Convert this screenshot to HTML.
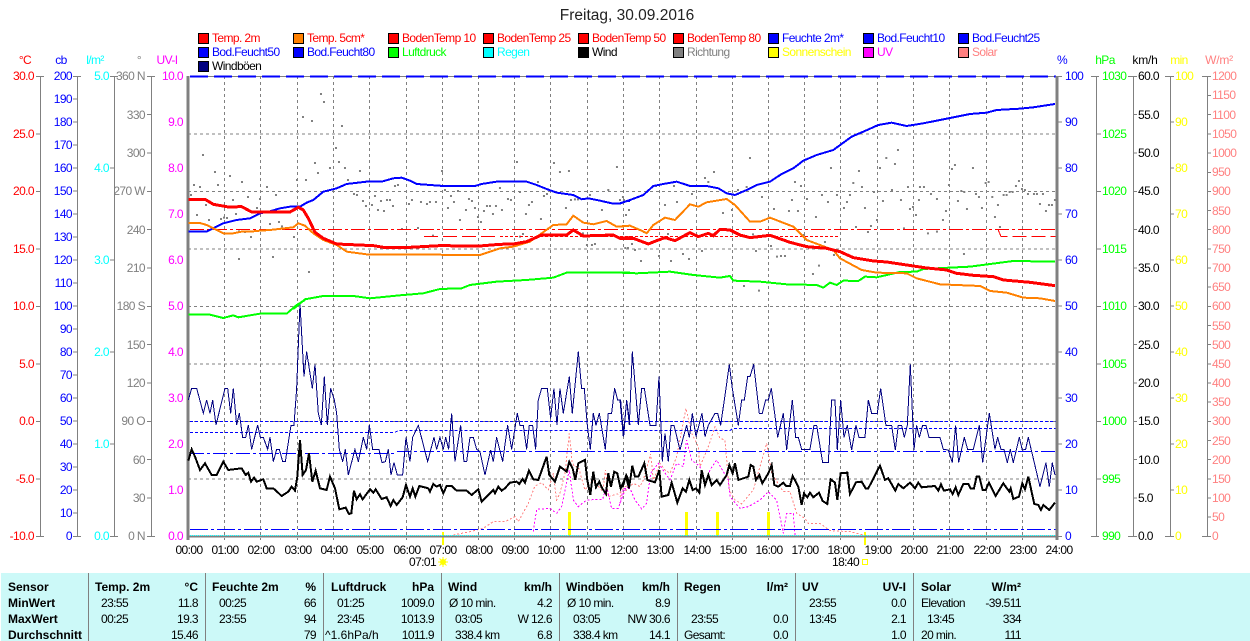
<!DOCTYPE html>
<html><head><meta charset="utf-8"><title>Freitag, 30.09.2016</title>
<style>
html,body{margin:0;padding:0;background:#fff;width:1250px;height:641px;overflow:hidden}
svg{display:block;font-family:"Liberation Sans",sans-serif;font-size:12px;letter-spacing:-.6px}
.e{text-anchor:end}.m{text-anchor:middle}
.b{font-weight:bold;letter-spacing:0}
polyline,.c{fill:none;shape-rendering:crispEdges}
</style></head><body>
<svg width="1250" height="641" viewBox="0 0 1250 641">
<text x="627" y="20" class="m" font-size="15.5" fill="#222" style="letter-spacing:0">Freitag, 30.09.2016</text>
<!-- legend -->
<g stroke="#000" shape-rendering="crispEdges">
<rect x="198.500" y="33.500" width="10" height="10" fill="#f00"/><rect x="293.500" y="33.500" width="10" height="10" fill="#ff8000"/><rect x="388.500" y="33.500" width="10" height="10" fill="#f00"/><rect x="483.500" y="33.500" width="10" height="10" fill="#f00"/><rect x="578.500" y="33.500" width="10" height="10" fill="#f00"/><rect x="673.500" y="33.500" width="10" height="10" fill="#f00"/><rect x="768.500" y="33.500" width="10" height="10" fill="#00f"/><rect x="863.500" y="33.500" width="10" height="10" fill="#00f"/><rect x="958.500" y="33.500" width="10" height="10" fill="#00f"/>
<rect x="198.500" y="47.500" width="10" height="10" fill="#00f"/><rect x="293.500" y="47.500" width="10" height="10" fill="#00f"/><rect x="388.500" y="47.500" width="10" height="10" fill="#0f0"/><rect x="483.500" y="47.500" width="10" height="10" fill="#0ff"/><rect x="578.500" y="47.500" width="10" height="10" fill="#000"/><rect x="673.500" y="47.500" width="10" height="10" fill="#808080"/><rect x="768.500" y="47.500" width="10" height="10" fill="#ff0"/><rect x="863.500" y="47.500" width="10" height="10" fill="#f0f"/><rect x="958.500" y="47.500" width="10" height="10" fill="#ff8080"/>
<rect x="198.500" y="61.500" width="10" height="10" fill="#000080"/>
</g>
<g>
<text x="212" y="42" fill="#f00">Temp. 2m</text><text x="307" y="42" fill="#f00">Temp. 5cm*</text><text x="402" y="42" fill="#f00">BodenTemp 10</text><text x="497" y="42" fill="#f00">BodenTemp 25</text><text x="592" y="42" fill="#f00">BodenTemp 50</text><text x="687" y="42" fill="#f00">BodenTemp 80</text><text x="782" y="42" fill="#00f">Feuchte 2m*</text><text x="877" y="42" fill="#00f">Bod.Feucht10</text><text x="972" y="42" fill="#00f">Bod.Feucht25</text>
<text x="212" y="56" fill="#00f">Bod.Feucht50</text><text x="307" y="56" fill="#00f">Bod.Feucht80</text><text x="402" y="56" fill="#0f0">Luftdruck</text><text x="497" y="56" fill="#0ff">Regen</text><text x="592" y="56" fill="#000">Wind</text><text x="687" y="56" fill="#808080">Richtung</text><text x="782" y="56" fill="#ff0">Sonnenschein</text><text x="877" y="56" fill="#f0f">UV</text><text x="972" y="56" fill="#ff8080">Solar</text>
<text x="212" y="70" fill="#000">Windböen</text>
</g>
<!-- axis units -->
<g class="m">
<text x="25" y="64" fill="#f00">°C</text><text x="61" y="64" fill="#00f">cb</text><text x="95" y="64" fill="#0ff">l/m²</text><text x="139" y="64" fill="#808080">°</text><text x="167" y="64" fill="#f0f">UV-I</text>
<text x="1062" y="64" fill="#00f">%</text><text x="1105" y="64" fill="#0f0">hPa</text><text x="1145" y="64" fill="#000" style="letter-spacing:-.2px">km/h</text><text x="1179" y="64" fill="#ff0">min</text><text x="1219" y="64" fill="#ff8080" style="letter-spacing:-.2px">W/m²</text>
</g>
<!-- axis lines -->
<g stroke="#808080" class="c">
<path d="M40.500 76V536M36 76.500h8M36 536.500h8M36 134h4M36 191.500h4M36 249h4M36 306.500h4M36 364h4M36 421.500h4M36 479h4"/>
<path d="M77.500 76V536M73 76.500h8M73 536.500h8M73 99h4M73 122h4M73 145h4M73 168h4M73 191h4M73 214h4M73 237h4M73 260h4M73 283h4M73 306h4M73 329h4M73 352h4M73 375h4M73 398h4M73 421h4M73 444h4M73 467h4M73 490h4M73 513h4"/>
<path d="M114.500 76V536M110 76.500h8M110 536.500h8M110 168h4M110 260h4M110 352h4M110 444h4"/>
<path d="M151.500 76V536M147 76.500h8M147 536.500h8M147 114.500h4M147 153h4M147 191.500h4M147 229.500h4M147 268h4M147 306.500h4M147 344.500h4M147 383h4M147 421.500h4M147 459.500h4M147 498h4"/>
<path d="M1096.500 76V536M1091 76.500h8M1091 536.500h8M1096 134h5M1096 191.500h5M1096 249h5M1096 306.500h5M1096 364h5M1096 421.500h5M1096 479h5"/>
<path d="M1133.500 76V536M1128 76.500h9M1128 536.500h9M1133 114.500h4M1133 153h4M1133 191.500h4M1133 229.500h4M1133 268h4M1133 306.500h4M1133 344.500h4M1133 383h4M1133 421.500h4M1133 459.500h4M1133 498h4"/>
<path d="M1170.500 76V536M1165 76.500h9M1165 536.500h9M1170 122h4M1170 168h4M1170 214h4M1170 260h4M1170 306h4M1170 352h4M1170 398h4M1170 444h4M1170 490h4"/>
<path d="M1207.500 76V536M1202 76.500h9M1202 536.500h9M1207 95.500h4M1207 114.500h4M1207 134h4M1207 153h4M1207 172.500h4M1207 191.500h4M1207 210.500h4M1207 229.500h4M1207 249h4M1207 268h4M1207 287h4M1207 306.500h4M1207 325.500h4M1207 344.500h4M1207 364h4M1207 383h4M1207 402h4M1207 421.500h4M1207 440.500h4M1207 459.500h4M1207 479h4M1207 498h4M1207 517h4"/>
<path d="M1056 76.500h6M1056 122h6M1056 168h6M1056 214h6M1056 260h6M1056 306h6M1056 352h6M1056 398h6M1056 444h6M1056 490h6M1056 536.500h6"/>
</g>
<!-- left labels -->
<g class="e" fill="#f00"><text x="34" y="80">30.0</text><text x="34" y="138">25.0</text><text x="34" y="195">20.0</text><text x="34" y="253">15.0</text><text x="34" y="310">10.0</text><text x="34" y="368">5.0</text><text x="34" y="425">0.0</text><text x="34" y="483">-5.0</text><text x="34" y="540">-10.0</text></g>
<g class="e" fill="#00f"><text x="72" y="80">200</text><text x="72" y="103">190</text><text x="72" y="126">180</text><text x="72" y="149">170</text><text x="72" y="172">160</text><text x="72" y="195">150</text><text x="72" y="218">140</text><text x="72" y="241">130</text><text x="72" y="264">120</text><text x="72" y="287">110</text><text x="72" y="310">100</text><text x="72" y="333">90</text><text x="72" y="356">80</text><text x="72" y="379">70</text><text x="72" y="402">60</text><text x="72" y="425">50</text><text x="72" y="448">40</text><text x="72" y="471">30</text><text x="72" y="494">20</text><text x="72" y="517">10</text><text x="72" y="540">0</text></g>
<g class="e" fill="#0ff"><text x="109" y="80">5.0</text><text x="109" y="172">4.0</text><text x="109" y="264">3.0</text><text x="109" y="356">2.0</text><text x="109" y="448">1.0</text><text x="109" y="540">0.0</text></g>
<g class="e" fill="#808080"><text x="145" y="80">360 N</text><text x="145" y="119">330</text><text x="145" y="157">300</text><text x="145" y="195">270 W</text><text x="145" y="234">240</text><text x="145" y="272">210</text><text x="145" y="310">180 S</text><text x="145" y="349">150</text><text x="145" y="387">120</text><text x="145" y="425">90 O</text><text x="145" y="464">60</text><text x="145" y="502">30</text><text x="145" y="540">0 N</text></g>
<g class="e" fill="#f0f"><text x="183" y="80">10.0</text><text x="183" y="126">9.0</text><text x="183" y="172">8.0</text><text x="183" y="218">7.0</text><text x="183" y="264">6.0</text><text x="183" y="310">5.0</text><text x="183" y="356">4.0</text><text x="183" y="402">3.0</text><text x="183" y="448">2.0</text><text x="183" y="494">1.0</text><text x="183" y="540">0.0</text></g>
<!-- right labels -->
<g fill="#00f"><text x="1065" y="80">100</text><text x="1065" y="126">90</text><text x="1065" y="172">80</text><text x="1065" y="218">70</text><text x="1065" y="264">60</text><text x="1065" y="310">50</text><text x="1065" y="356">40</text><text x="1065" y="402">30</text><text x="1065" y="448">20</text><text x="1065" y="494">10</text><text x="1065" y="540">0</text></g>
<g fill="#0f0"><text x="1102" y="80">1030</text><text x="1102" y="138">1025</text><text x="1102" y="195">1020</text><text x="1102" y="253">1015</text><text x="1102" y="310">1010</text><text x="1102" y="368">1005</text><text x="1102" y="425">1000</text><text x="1102" y="483">995</text><text x="1102" y="540">990</text></g>
<g fill="#000"><text x="1138" y="80">60.0</text><text x="1138" y="119">55.0</text><text x="1138" y="157">50.0</text><text x="1138" y="195">45.0</text><text x="1138" y="234">40.0</text><text x="1138" y="272">35.0</text><text x="1138" y="310">30.0</text><text x="1138" y="349">25.0</text><text x="1138" y="387">20.0</text><text x="1138" y="425">15.0</text><text x="1138" y="464">10.0</text><text x="1138" y="502">5.0</text><text x="1138" y="540">0.0</text></g>
<g fill="#ff0"><text x="1175" y="80">100</text><text x="1175" y="126">90</text><text x="1175" y="172">80</text><text x="1175" y="218">70</text><text x="1175" y="264">60</text><text x="1175" y="310">50</text><text x="1175" y="356">40</text><text x="1175" y="402">30</text><text x="1175" y="448">20</text><text x="1175" y="494">10</text><text x="1175" y="540">0</text></g>
<g fill="#ff8080"><text x="1212" y="80">1200</text><text x="1212" y="99">1150</text><text x="1212" y="119">1100</text><text x="1212" y="138">1050</text><text x="1212" y="157">1000</text><text x="1212" y="176">950</text><text x="1212" y="195">900</text><text x="1212" y="215">850</text><text x="1212" y="234">800</text><text x="1212" y="253">750</text><text x="1212" y="272">700</text><text x="1212" y="291">650</text><text x="1212" y="310">600</text><text x="1212" y="330">550</text><text x="1212" y="349">500</text><text x="1212" y="368">450</text><text x="1212" y="387">400</text><text x="1212" y="406">350</text><text x="1212" y="425">300</text><text x="1212" y="445">250</text><text x="1212" y="464">200</text><text x="1212" y="483">150</text><text x="1212" y="502">100</text><text x="1212" y="521">50</text><text x="1212" y="540">0</text></g>
<!-- grid -->
<g stroke="#808080" stroke-dasharray="3 3" class="c">
<path d="M188 134H1056M188 191.500H1056M188 249H1056M188 306.500H1056M188 364H1056M188 421.500H1056M188 479H1056"/>
<path d="M224.500 76V540M260.500 76V540M297.500 76V540M333.500 76V540M369.500 76V540M406.500 76V540M442.500 76V540M478.500 76V540M514.500 76V540M550.500 76V540M587.500 76V540M623.500 76V540M659.500 76V540M696.500 76V540M732.500 76V540M768.500 76V540M804.500 76V540M840.500 76V540M877.500 76V540M913.500 76V540M949.500 76V540M986.500 76V540M1022.500 76V540"/>
</g>
<!-- direction dots -->
<path transform="translate(180 70) scale(.3333)" fill="none" stroke="#808080" stroke-width="6" stroke-linecap="square" d="M423 72h0M432 96h0M369 141h0M396 153h0M486 168h0M468 234h0M69 255h0M477 276h0M405 279h0M1011 276h0M1122 279h0M450 294h0M495 294h0M105 306h0M414 309h0M540 303h0M786 303h0M1140 306h0M1167 303h0M1311 291h0M150 318h0M351 330h0M378 330h0M504 330h0M186 336h0M114 345h0M42 345h0M60 351h0M261 351h0M1074 336h0M654 345h0M645 348h0M960 354h0M1020 366h0M1285 360h0M795 360h0M33 375h0M204 381h0M288 375h0M240 387h0M159 390h0M78 405h0M522 372h0M531 375h0M813 378h0M1092 378h0M834 363h0M1101 372h0M585 378h0M549 393h0M558 408h0M576 405h0M621 390h0M630 390h0M603 393h0M984 387h0M993 390h0M1056 396h0M1047 405h0M696 390h0M723 396h0M741 402h0M750 396h0M768 396h0M867 387h0M876 393h0M822 396h0M687 402h0M921 408h0M930 408h0M948 408h0M1173 390h0M1230 375h0M1185 388h0M1194 388h0M1329 381h0M1332 390h0M231 414h0M594 420h0M612 423h0M639 408h0M804 414h0M858 420h0M885 414h0M1158 414h0M1266 420h0M912 423h0M939 432h0M966 420h0M1038 432h0M51 435h0M132 443h0M123 447h0M141 444h0M168 432h0M87 450h0M840 450h0M1083 447h0M894 441h0M903 456h0M297 456h0M306 469h0M270 462h0M666 477h0M714 474h0M759 497h0M1209 490h0M1245 522h0M1236 525h0M1221 525h0M1029 492h0M1020 500h0M177 484h0M195 486h0M213 501h0M342 501h0M1336 534h0M1344 534h0M279 561h0M177 567h0M387 606h0"/>
<path transform="translate(620 70) scale(.3333)" fill="none" stroke="#808080" stroke-width="6" stroke-linecap="square" d="M390 264h0M834 240h0M799 264h0M825 282h0M633 294h0M282 306h0M717 303h0M780 294h0M996 297h0M1005 285h0M1059 294h0M255 324h0M265 336h0M525 336h0M543 348h0M987 345h0M1097 339h0M1106 336h0M1197 333h0M1188 348h0M900 351h0M864 351h0M912 351h0M700 339h0M726 351h0M162 348h0M108 348h0M816 360h0M354 360h0M380 351h0M354 372h0M426 381h0M516 390h0M561 387h0M606 375h0M651 375h0M690 375h0M762 366h0M933 372h0M951 387h0M1024 363h0M1033 366h0M1068 372h0M1077 381h0M1117 381h0M1151 375h0M1160 375h0M1169 366h0M1178 366h0M1206 357h0M1215 360h0M1224 372h0M1242 372h0M1251 372h0M1269 372h0M1260 402h0M1287 405h0M1296 405h0M1278 423h0M1305 390h0M135 405h0M171 396h0M216 372h0M27 420h0M0 390h0M624 396h0M681 396h0M789 393h0M843 390h0M897 390h0M1014 393h0M1134 405h0M1086 414h0M735 414h0M1041 417h0M1125 441h0M969 450h0M978 423h0M672 414h0M588 441h0M888 435h0M870 417h0M879 411h0M462 417h0M507 423h0M534 423h0M309 429h0M336 420h0M18 435h0M36 522h0M45 540h0M72 486h0M144 492h0M399 493h0M453 528h0M246 543h0M408 543h0M189 552h0M207 567h0M117 558h0M153 573h0M63 573h0M471 560h0M483 558h0M495 558h0M615 516h0M552 495h0M708 471h0M744 486h0M753 468h0M771 450h0M852 475h0M924 490h0M951 485h0M1032 552h0M1140 471h0M642 555h0M597 587h0M579 612h0M372 648h0M417 662h0M336 480h0M318 477h0"/>
<!-- sun bars -->
<g fill="#ff0" shape-rendering="crispEdges"><rect x="442" y="532" width="2" height="13"/><rect x="568" y="512" width="3" height="24"/><rect x="685" y="512" width="3" height="24"/><rect x="716" y="512" width="3" height="24"/><rect x="767" y="512" width="3" height="24"/><rect x="864" y="532" width="2" height="13"/></g>
<!-- solar + UV -->
<g stroke-dasharray="6 6" class="c">
<polyline transform="translate(180 300) scale(.3333)" stroke="#ff8080" stroke-width="3" points="820,705 870,695 910,685 940,665 975,665 1005,650 1015,665 1045,610 1065,558 1085,548 1105,570 1120,520 1130,600 1140,580 1155,520 1168,400 1177,490 1185,500 1195,500 1215,570 1240,540 1268,575 1277,510 1285,590 1320,580 1335,560 1350,555"/>
<polyline transform="translate(620 300) scale(.3333)" stroke="#ff8080" stroke-width="3" points="0,590 40,550 60,560 70,540 92,462 100,540 120,490 135,510 150,520 170,470 198,325 215,400 235,440 240,500 265,440 285,380 300,415 315,420 328,570 345,600 365,612 400,570 440,430 455,520 490,575 510,575 530,640 555,655 565,670 600,670 630,692 690,695 730,705"/>
<polyline transform="translate(180 300) scale(.3333)" stroke="#f0f" stroke-width="3" points="1060,695 1070,628 1110,625 1130,640 1145,620 1168,510 1180,600 1195,620 1220,600 1268,598 1280,560 1295,625 1315,625 1335,570 1350,555"/>
<polyline transform="translate(620 300) scale(.3333)" stroke="#f0f" stroke-width="3" points="0,610 10,565 30,565 45,600 65,627 80,610 92,520 115,490 150,540 170,490 190,500 200,420 215,480 240,500 255,560 270,510 290,480 310,515 325,540 330,590 360,625 385,620 420,600 445,575 470,600 490,700 500,640 520,640 525,705"/>
</g>
<!-- soil lines -->
<g class="c">
<path d="M190 229.500H1056" stroke="#f00" stroke-dasharray="14 3 3 3"/>
<path d="M424 236.500H500" stroke="#f00" stroke-dasharray="14 5"/>
<path d="M500 236.500H838" stroke="#f00" stroke-dasharray="3 2"/>
<path d="M998 229.500L1001 236.500H1056" stroke="#f00" stroke-dasharray="14 5"/>
<path d="M190 421.500H1056" stroke="#00f" stroke-dasharray="3 2"/>
<path d="M190 432.500H394L399 430.500H730L733 428.500H1056" stroke="#00f" stroke-dasharray="3 2"/>
<path d="M190 453.500H395M397 451.500H1056" stroke="#00f" stroke-dasharray="14 3 3 3"/>
<path d="M190 529.500H1056" stroke="#00f" stroke-dasharray="18 3 3 3"/>
<path d="M190 76.500H1056" stroke="#808080"/>
<path d="M190 76.500H1056" stroke="#00f" stroke-width="2" stroke-dasharray="18 6"/>
<path d="M188 536.500H1056" stroke="#808080" stroke-width="2"/>
<path d="M188 535.500H1056" stroke="#0ff" stroke-dasharray="1 1"/>
<path d="M188 76V540" stroke="#808080" stroke-width="3"/>
<path d="M1057 76V540" stroke="#808080" stroke-width="3"/>
</g>
<!-- gusts -->
<g class="c" stroke="#000080" stroke-width="3">
<polyline transform="translate(180 300) scale(.3333)" points="25,300 35,265 50,265 70,340 80,300 90,340 98,300 108,375 135,265 143,265 152,340 160,265 170,375 178,340 188,412 197,412 205,375 215,448 233,375 241,412 250,412 263,448 270,412 280,485 290,448 298,448 308,485 316,485 333,376 342,376 350,265 360,10 372,230 380,155 397,265 405,193 415,340 424,375 433,230 442,375 452,265 463,300 470,340 478,448 488,485 496,448 505,525 525,448 535,485 550,412 560,448 568,375 578,448 597,448 606,488 616,485 625,448 633,525 642,488 652,525 668,525 678,412 690,485 698,412 715,376 743,485 762,412 770,448 780,412 790,448 797,412 806,448 815,340 825,485 842,376 852,485 860,485 870,412 880,412 890,448 900,455 915,525 932,450 940,485 950,412 968,485 983,376 995,448 1012,340 1020,376 1030,376 1040,448 1048,376 1058,376 1067,448 1075,300 1085,265 1102,265 1112,355 1122,265 1131,375 1140,265 1150,340 1168,230 1177,340 1195,155 1205,265 1213,265 1222,375 1231,448 1240,340 1248,376 1258,340 1276,448 1285,340 1295,340 1304,265 1313,300 1322,300 1331,410 1340,300 1350,375"/>
<polyline transform="translate(620 300) scale(.3333)" points="0,300 10,410 20,300 28,375 37,155 55,375 65,265 73,265 90,376 108,376 117,230 127,485 135,400 145,485 153,376 162,376 180,450 190,412 200,376 208,412 217,340 228,410 246,340 255,410 265,376 285,340 293,340 302,376 318,265 328,193 337,265 355,376 365,300 373,300 383,230 390,230 401,193 418,340 427,340 437,300 445,300 454,265 464,340 473,412 490,340 500,450 517,300 527,412 535,412 545,448 570,448 582,376 590,376 608,488 625,488 635,300 645,300 652,450 662,300 672,412 682,376 695,450 708,376 717,412 735,412 745,300 755,340 772,340 782,265 798,376 815,376 826,450 835,376 845,376 853,412 862,376 871,193 882,450 890,376 898,412 908,376 918,376 927,412 960,412 970,448 985,450 997,488 1007,376 1016,488 1033,412 1043,448 1060,448 1078,376 1088,488 1108,340 1125,448 1133,412 1143,448 1152,448 1162,488 1171,448 1180,488 1198,412 1207,450 1217,448 1225,412 1243,488 1260,560 1278,488 1288,560 1297,488 1305,525"/>
</g>
<!-- wind -->
<g class="c" stroke="#000" stroke-width="6">
<polyline transform="translate(180 300) scale(.3333)" points="25,482 35,448 45,470 60,510 75,490 95,525 110,525 130,485 145,510 185,505 197,525 205,518 213,545 222,533 230,545 250,538 260,565 280,565 305,588 325,575 335,560 345,572 352,530 360,420 368,525 378,510 387,460 397,545 407,512 420,565 440,570 450,530 465,565 478,628 497,623 507,642 514,640 522,572 530,598 540,583 548,598 570,568 580,578 587,568 605,597 620,592 632,618 640,600 650,615 668,592 678,555 690,590 698,565 706,590 718,558 745,565 750,575 760,552 770,560 780,555 790,580 800,558 815,558 830,572 845,572 860,572 875,585 895,568 905,605 920,590 940,570 945,580 955,560 965,572 975,565 990,548 1010,545 1018,552 1028,537 1035,548 1047,512 1060,538 1075,540 1100,470 1108,525 1125,545 1140,500 1160,515 1168,485 1178,505 1186,540 1195,490 1215,480 1222,540 1231,585 1240,515 1248,562 1258,545 1265,562 1278,582 1285,520 1293,560 1303,515 1312,520 1322,565 1340,528 1350,550"/>
<polyline transform="translate(620 300) scale(.3333)" points="0,560 8,560 18,528 27,565 37,497 45,530 55,530 73,490 82,540 105,547 118,510 125,590 145,585 155,548 172,608 188,565 198,575 208,540 218,570 228,565 238,578 245,510 255,555 265,525 275,555 290,540 300,555 320,525 328,495 338,520 345,490 355,540 385,530 392,495 400,500 408,540 418,525 427,550 445,520 455,495 463,555 475,560 490,548 498,558 510,558 518,528 535,560 545,615 552,580 562,592 570,578 580,592 597,578 608,603 622,612 632,538 645,548 652,600 662,520 682,518 690,582 708,547 725,545 737,565 745,565 780,497 795,540 805,535 826,572 835,552 850,565 870,548 885,565 895,548 905,562 945,558 955,572 963,553 972,572 990,568 998,582 1007,562 1015,585 1030,552 1045,552 1052,565 1062,565 1070,530 1078,530 1088,570 1097,570 1107,548 1127,588 1150,550 1168,575 1172,565 1180,597 1197,590 1207,550 1215,568 1225,530 1243,612 1255,615 1263,630 1270,615 1288,630 1305,608"/>
</g>
<!-- pressure -->
<g class="c" stroke="#0f0" stroke-width="6">
<polyline transform="translate(180 300) scale(.3333)" points="25,44 90,44 130,54 160,46 175,52 240,41 320,41 350,15 375,0"/>
<polyline transform="translate(180 70) scale(.3333)" points="340,717 375,688 430,678 520,678 570,685 660,676 730,670 780,657 845,655 870,645 950,635 1040,630 1120,623 1160,608 1180,608 1265,608 1350,608"/>
<polyline transform="translate(620 70) scale(.3333)" points="0,608 50,610 150,605 220,615 300,623 330,618 340,632 420,635 500,643 590,645 610,653 630,638 650,645 670,632 715,633 735,620 770,622 840,606 890,605 910,597 1050,590 1180,573 1305,575"/>
</g>
<!-- humidity -->
<g class="c" stroke="#00f" stroke-width="6">
<polyline transform="translate(180 70) scale(.3333)" points="25,485 80,485 100,475 130,460 170,450 210,445 240,430 270,424 300,415 330,410 360,410 380,398 400,390 430,365 470,355 500,342 560,335 605,335 640,325 665,323 690,332 710,342 750,345 790,348 885,348 905,342 950,335 1040,335 1070,345 1100,357 1130,368 1180,375 1205,388 1225,385 1260,392 1300,401 1320,401 1340,393 1350,393"/>
<polyline transform="translate(620 70) scale(.3333)" points="0,400 30,390 70,375 100,348 130,342 170,335 210,348 260,348 295,355 320,370 345,375 380,360 410,345 450,335 485,312 520,295 550,272 590,255 640,240 695,200 730,185 775,165 815,158 860,168 910,160 970,148 1050,132 1100,128 1130,120 1200,116 1240,112 1305,102"/>
</g>
<!-- temp 5cm -->
<g class="c" stroke="#ff8000" stroke-width="6">
<polyline transform="translate(180 70) scale(.3333)" points="25,459 60,459 80,465 100,475 130,490 160,490 190,484 210,485 240,482 270,480 340,472 355,460 375,467 400,490 430,510 470,525 500,545 560,553 900,555 960,535 1000,530 1050,515 1085,490 1120,465 1160,463 1180,437 1210,458 1240,463 1280,453 1310,470 1350,467"/>
<polyline transform="translate(620 70) scale(.3333)" points="0,470 30,467 60,480 80,490 100,465 135,443 165,450 210,403 235,410 260,397 320,387 345,405 390,455 420,455 450,443 520,470 560,510 640,540 660,565 725,600 770,608 860,610 890,625 960,643 1080,648 1110,663 1160,668 1210,683 1260,685 1305,693"/>
</g>
<!-- temp 2m -->
<g class="c" stroke="#f00" stroke-width="9">
<polyline transform="translate(180 70) scale(.3333)" points="25,388 75,388 100,403 145,411 185,410 215,426 240,426 330,426 355,412 370,420 385,445 405,487 430,505 470,522 580,527 610,532 690,532 780,527 880,528 900,528 960,523 1000,522 1040,515 1085,495 1160,495 1180,480 1210,498 1300,495 1320,505 1350,503"/>
<polyline transform="translate(620 70) scale(.3333)" points="0,505 40,505 85,522 110,512 135,503 165,512 210,488 235,500 265,490 280,497 300,478 330,480 360,495 390,503 450,496 510,517 560,530 620,535 660,545 700,563 760,573 800,576 860,585 920,594 980,600 1010,610 1060,616 1120,620 1150,630 1230,637 1305,647"/>
</g>
<!-- time labels -->
<g class="m" fill="#000"><text x="189" y="554">00:00</text><text x="225" y="554">01:00</text><text x="261" y="554">02:00</text><text x="298" y="554">03:00</text><text x="334" y="554">04:00</text><text x="370" y="554">05:00</text><text x="407" y="554">06:00</text><text x="443" y="554">07:00</text><text x="479" y="554">08:00</text><text x="515" y="554">09:00</text><text x="551" y="554">10:00</text><text x="588" y="554">11:00</text><text x="624" y="554">12:00</text><text x="660" y="554">13:00</text><text x="697" y="554">14:00</text><text x="733" y="554">15:00</text><text x="769" y="554">16:00</text><text x="805" y="554">17:00</text><text x="841" y="554">18:00</text><text x="878" y="554">19:00</text><text x="914" y="554">20:00</text><text x="950" y="554">21:00</text><text x="987" y="554">22:00</text><text x="1023" y="554">23:00</text><text x="1059" y="554">24:00</text></g>
<text x="409" y="566">07:01</text><text x="832" y="566">18:40</text>
<circle cx="443" cy="562" r="3" fill="#ff0"/>
<path d="M443 557v10M438 562h10M439.500 558.500l7 7M446.500 558.500l-7 7" stroke="#ff0" fill="none"/>
<rect x="862.500" y="559.500" width="5" height="5" fill="#fff" stroke="#ff0" shape-rendering="crispEdges"/>
<!-- table -->
<rect x="1" y="573" width="1249" height="68" fill="#ccf9f8"/>
<path class="c" stroke="#808080" d="M88.500 573V641M205.500 573V641M323.500 573V641M441.500 573V641M559.500 573V641M677.500 573V641M795.500 573V641M913.500 573V641"/>
<g fill="#000">
<g class="b"><text x="8" y="591">Sensor</text><text x="8" y="607">MinWert</text><text x="8" y="623">MaxWert</text><text x="8" y="639">Durchschnitt</text>
<text x="95" y="591">Temp. 2m</text><text x="198" y="591" class="e">°C</text>
<text x="212" y="591">Feuchte 2m</text><text x="316" y="591" class="e">%</text>
<text x="331" y="591">Luftdruck</text><text x="434" y="591" class="e">hPa</text>
<text x="448" y="591">Wind</text><text x="552" y="591" class="e">km/h</text>
<text x="566" y="591">Windböen</text><text x="670" y="591" class="e">km/h</text>
<text x="684" y="591">Regen</text><text x="788" y="591" class="e">l/m²</text>
<text x="802" y="591">UV</text><text x="906" y="591" class="e">UV-I</text>
<text x="921" y="591">Solar</text><text x="1021" y="591" class="e">W/m²</text></g>
<text x="101" y="607">23:55</text><text x="198" y="607" class="e">11.8</text><text x="101" y="623">00:25</text><text x="198" y="623" class="e">19.3</text><text x="198" y="639" class="e">15.46</text>
<text x="219" y="607">00:25</text><text x="316" y="607" class="e">66</text><text x="219" y="623">23:55</text><text x="316" y="623" class="e">94</text><text x="316" y="639" class="e">79</text>
<text x="337" y="607">01:25</text><text x="434" y="607" class="e">1009.0</text><text x="337" y="623">23:45</text><text x="434" y="623" class="e">1013.9</text><text x="325" y="639" style="letter-spacing:0">^1.6hPa/h</text><text x="434" y="639" class="e">1011.9</text>
<text x="449" y="607">Ø 10 min.</text><text x="552" y="607" class="e">4.2</text><text x="455" y="623">03:05</text><text x="552" y="623" class="e">W 12.6</text><text x="455" y="639">338.4 km</text><text x="552" y="639" class="e">6.8</text>
<text x="567" y="607">Ø 10 min.</text><text x="670" y="607" class="e">8.9</text><text x="573" y="623">03:05</text><text x="670" y="623" class="e">NW 30.6</text><text x="573" y="639">338.4 km</text><text x="670" y="639" class="e">14.1</text>
<text x="691" y="623">23:55</text><text x="788" y="623" class="e">0.0</text><text x="684" y="639">Gesamt:</text><text x="788" y="639" class="e">0.0</text>
<text x="809" y="607">23:55</text><text x="906" y="607" class="e">0.0</text><text x="809" y="623">13:45</text><text x="906" y="623" class="e">2.1</text><text x="906" y="639" class="e">1.0</text>
<text x="921" y="607">Elevation</text><text x="1021" y="607" class="e">-39.511</text><text x="927" y="623">13:45</text><text x="1021" y="623" class="e">334</text><text x="921" y="639">20 min.</text><text x="1021" y="639" class="e">111</text>
</g>
</svg>
</body></html>
